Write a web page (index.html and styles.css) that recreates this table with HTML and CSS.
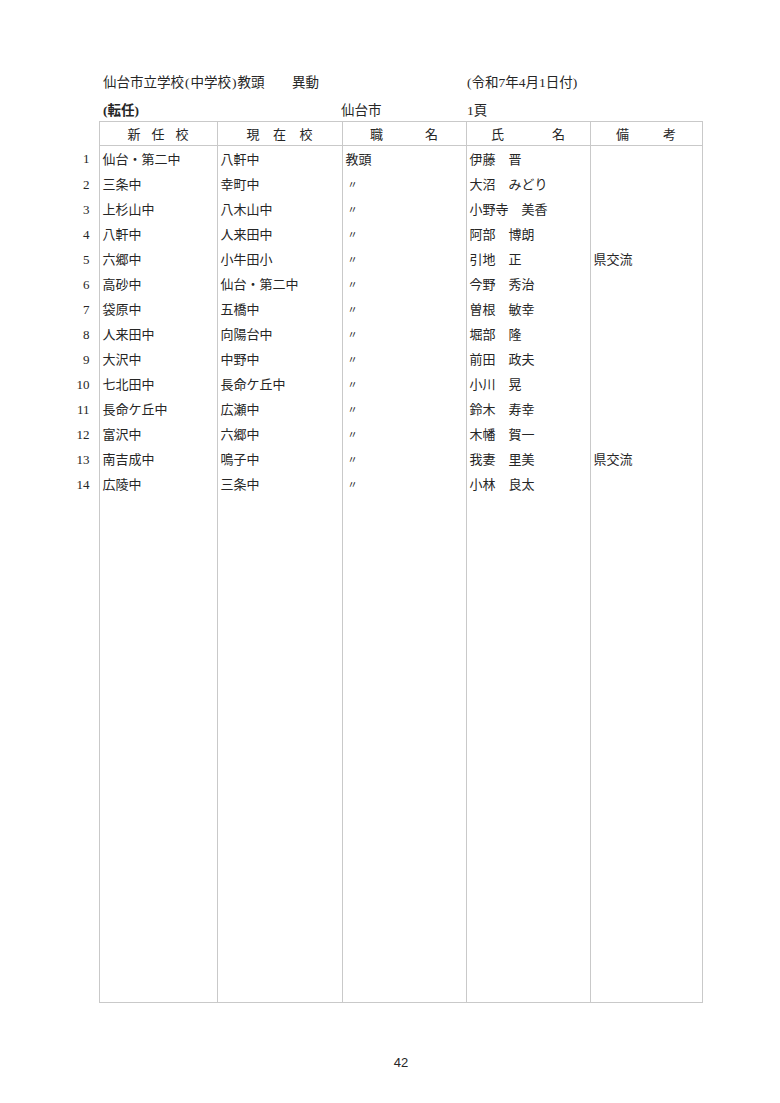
FILE: index.html
```html
<!DOCTYPE html>
<html lang="ja">
<head>
<meta charset="utf-8">
<title>仙台市立学校(中学校)教頭 異動</title>
<link rel="stylesheet" href="styles.css">
</head>
<body>
<div class="page">
  <div class="line line1">
    <span class="t1">仙台市立学校<span class="pr">(</span>中学校<span class="pr">)</span>教頭</span>
    <span class="t2">異動</span>
    <span class="t3">(令和7年4月1日付)</span>
  </div>
  <div class="line line2">
    <span class="s1 bold">(転任)</span>
    <span class="s2">仙台市</span>
    <span class="s3">1頁</span>
  </div>
  <table class="list">
    <colgroup>
      <col class="c0"><col class="c1"><col class="c2"><col class="c3"><col class="c4"><col class="c5">
    </colgroup>
    <thead>
      <tr>
        <th class="num"></th>
        <th><span class="sp w1"><i>新</i><i>任</i><i>校</i></span></th>
        <th><span class="sp w2"><i>現</i><i>在</i><i>校</i></span></th>
        <th><span class="sp w3"><i>職</i><i>名</i></span></th>
        <th><span class="sp w4"><i>氏</i><i>名</i></span></th>
        <th><span class="sp w5"><i>備</i><i>考</i></span></th>
      </tr>
    </thead>
    <tbody>
      <tr class="first"><td class="num">1</td><td>仙台・第二中</td><td>八軒中</td><td>教頭</td><td>伊藤　晋</td><td></td></tr>
      <tr><td class="num">2</td><td>三条中</td><td>幸町中</td><td class="ditto">〃</td><td>大沼　みどり</td><td></td></tr>
      <tr><td class="num">3</td><td>上杉山中</td><td>八木山中</td><td class="ditto">〃</td><td>小野寺　美香</td><td></td></tr>
      <tr><td class="num">4</td><td>八軒中</td><td>人来田中</td><td class="ditto">〃</td><td>阿部　博朗</td><td></td></tr>
      <tr><td class="num">5</td><td>六郷中</td><td>小牛田小</td><td class="ditto">〃</td><td>引地　正</td><td>県交流</td></tr>
      <tr><td class="num">6</td><td>高砂中</td><td>仙台・第二中</td><td class="ditto">〃</td><td>今野　秀治</td><td></td></tr>
      <tr><td class="num">7</td><td>袋原中</td><td>五橋中</td><td class="ditto">〃</td><td>曽根　敏幸</td><td></td></tr>
      <tr><td class="num">8</td><td>人来田中</td><td>向陽台中</td><td class="ditto">〃</td><td>堀部　隆</td><td></td></tr>
      <tr><td class="num">9</td><td>大沢中</td><td>中野中</td><td class="ditto">〃</td><td>前田　政夫</td><td></td></tr>
      <tr><td class="num">10</td><td>七北田中</td><td>長命ケ丘中</td><td class="ditto">〃</td><td>小川　晃</td><td></td></tr>
      <tr><td class="num">11</td><td>長命ケ丘中</td><td>広瀬中</td><td class="ditto">〃</td><td>鈴木　寿幸</td><td></td></tr>
      <tr><td class="num">12</td><td>富沢中</td><td>六郷中</td><td class="ditto">〃</td><td>木幡　賀一</td><td></td></tr>
      <tr><td class="num">13</td><td>南吉成中</td><td>鳴子中</td><td class="ditto">〃</td><td>我妻　里美</td><td>県交流</td></tr>
      <tr><td class="num">14</td><td>広陵中</td><td>三条中</td><td class="ditto">〃</td><td>小林　良太</td><td></td></tr>
      <tr class="filler"><td class="num"></td><td></td><td></td><td></td><td></td><td></td></tr>
    </tbody>
  </table>
  <div class="pageno">42</div>
</div>
</body>
</html>
```
FILE: styles.css
```css
html, body {
  margin: 0;
  padding: 0;
  background: #ffffff;
}
body {
  font-family: "Liberation Serif", "Noto Sans CJK JP", serif;
  font-size: 13px;
  color: #262626;
}
.page {
  width: 780px;
  padding-top: 73px;
}
.line {
  display: flex;
  height: 20px;
  line-height: 20px;
  font-size: 13.5px;
}
.line1 {
  padding-left: 103px;
  margin-bottom: 8px;
}
.t1 { width: 189px; white-space: nowrap; }
.t2 { width: 175px; }
.pr { padding: 0 1px; }
.line2 { padding-left: 103px; }
.s1 { width: 238px; }
.s2 { width: 126px; }
.bold { font-weight: bold; }

.list {
  border-collapse: collapse;
  table-layout: fixed;
  width: 702px;
}
.c0 { width: 99px; }
.c1 { width: 118px; }
.c2 { width: 125px; }
.c3 { width: 124px; }
.c4 { width: 124px; }
.c5 { width: 112px; }

.list th, .list td {
  border-left: 1px solid #c9c9c9;
  border-right: 1px solid #c9c9c9;
  padding: 0 0 0 3px;
  text-align: left;
  font-weight: normal;
  white-space: nowrap;
  overflow: hidden;
}
.list th {
  height: 23px;
  border-top: 1px solid #c9c9c9;
  border-bottom: 1px solid #c9c9c9;
  text-align: center;
  padding: 0;
}
.list td {
  height: 25px;
  line-height: 25px;
}
.list tr.first td { height: 26px; }
.list .num, .list th.num {
  border: none;
  text-align: right;
  padding: 0 9px 0 0;
}
.list tr.filler td {
  height: 505px;
  border-bottom: 1px solid #c9c9c9;
}
.list tr.filler td.num { border: none; }
.ditto {
  font-size: 10px;
}
.ditto {
  padding-left: 5px !important;
}
.sp {
  display: inline-flex;
  justify-content: space-between;
  vertical-align: middle;
}
.sp i { font-style: normal; }
.w1 { width: 61px; }
.w2 { width: 66px; }
.w3 { width: 68px; }
.w4 { width: 74px; }
.w5 { width: 60px; }

.pageno {
  margin-top: 52px;
  text-align: center;
  font-family: "Liberation Sans", Arial, sans-serif;
  font-size: 13px;
  padding-left: 22px;
}
```
